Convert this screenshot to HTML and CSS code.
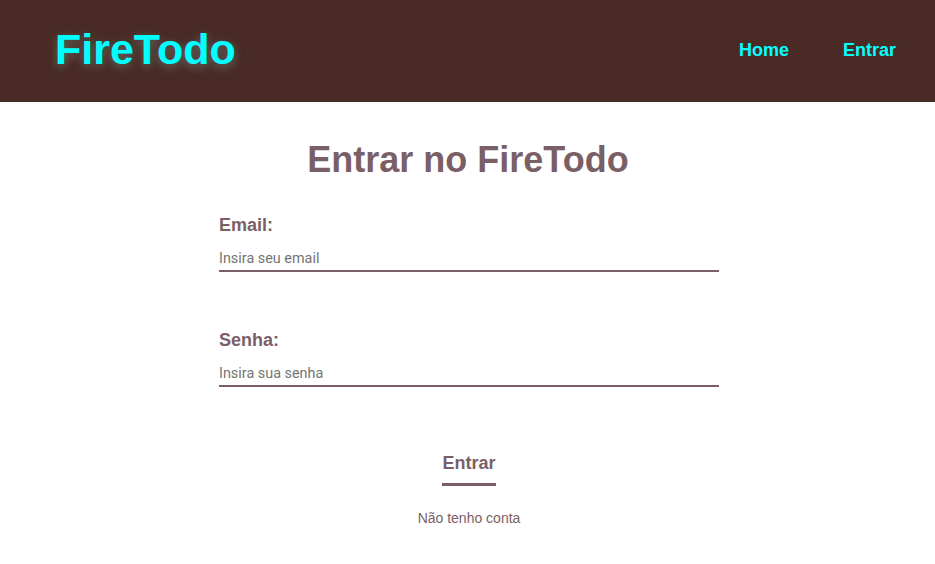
FILE: index.html
```html
<!DOCTYPE html>
<html lang="pt">
<head>
<meta charset="utf-8">
<title>FireTodo</title>
<link rel="stylesheet" href="styles.css">
</head>
<body>
<header class="topbar">
  <a class="logo" href="#">FireTodo</a>
  <nav class="nav">
    <a href="#">Home</a>
    <a href="#">Entrar</a>
  </nav>
</header>
<main class="main">
  <h1 class="title">Entrar no FireTodo</h1>
  <form class="form">
    <div class="field">
      <label class="label" for="email">Email:</label>
      <input class="input" id="email" type="email" placeholder="Insira seu email">
    </div>
    <div class="field">
      <label class="label" for="senha">Senha:</label>
      <input class="input" id="senha" type="password" placeholder="Insira sua senha">
    </div>
    <div class="actions">
      <button class="submit" type="button">Entrar</button>
      <a class="link" href="#">Não tenho conta</a>
    </div>
  </form>
</main>
</body>
</html>
```
FILE: styles.css
```css
* { box-sizing: border-box; }
body {
  margin: 0;
  font-family: "Liberation Sans", Arial, sans-serif;
  background: #fff;
  color: #7a5f66;
}
.topbar {
  height: 102px;
  background: #4a2a24;
  display: flex;
  align-items: center;
  justify-content: space-between;
  padding: 0 39px 0 55px;
}
.logo {
  color: #00ffff;
  font-size: 43px;
  font-weight: bold;
  text-decoration: none;
  text-shadow: 0 3px 10px rgba(110, 130, 125, 0.75);
  margin-top: -4px;
}
.nav {
  display: flex;
  gap: 54px;
  margin-top: -2px;
}
.nav a {
  color: #00ffff;
  font-size: 18px;
  font-weight: bold;
  text-decoration: none;
}
.main {
  display: flex;
  flex-direction: column;
  align-items: center;
}
.title {
  font-size: 36px;
  font-weight: bold;
  margin: 36px 0 0;
  line-height: 44px;
  padding-left: 1px;
}
.form {
  width: 500px;
  margin-top: 32px;
  margin-left: 3px;
  display: flex;
  flex-direction: column;
}
.field {
  display: flex;
  flex-direction: column;
  margin-bottom: 57px;
}
.field + .actions { margin-top: 8px; }
.label {
  font-size: 18px;
  font-weight: bold;
  line-height: 22px;
}
.input {
  margin-top: 14px;
  border: none;
  border-bottom: 2px solid #7a5f66;
  padding: 0 0 4px;
  font-family: Roboto, "Liberation Sans", sans-serif;
  font-size: 14.4px;
  line-height: 16px;
  height: 22px;
  color: #7a5f66;
  outline: none;
  background: transparent;
}
.input::placeholder { color: #757575; }
.actions {
  display: flex;
  flex-direction: column;
  align-items: center;
}
.submit {
  border: none;
  background: none;
  border-bottom: 3px solid #7a5f66;
  padding: 0 0 9px;
  font-family: "Liberation Sans", Arial, sans-serif;
  font-size: 18px;
  font-weight: bold;
  line-height: 22px;
  color: #7a5f66;
}
.link {
  margin-top: 24px;
  font-size: 14px;
  line-height: 16px;
  color: #7a5f66;
  text-decoration: none;
}
```
